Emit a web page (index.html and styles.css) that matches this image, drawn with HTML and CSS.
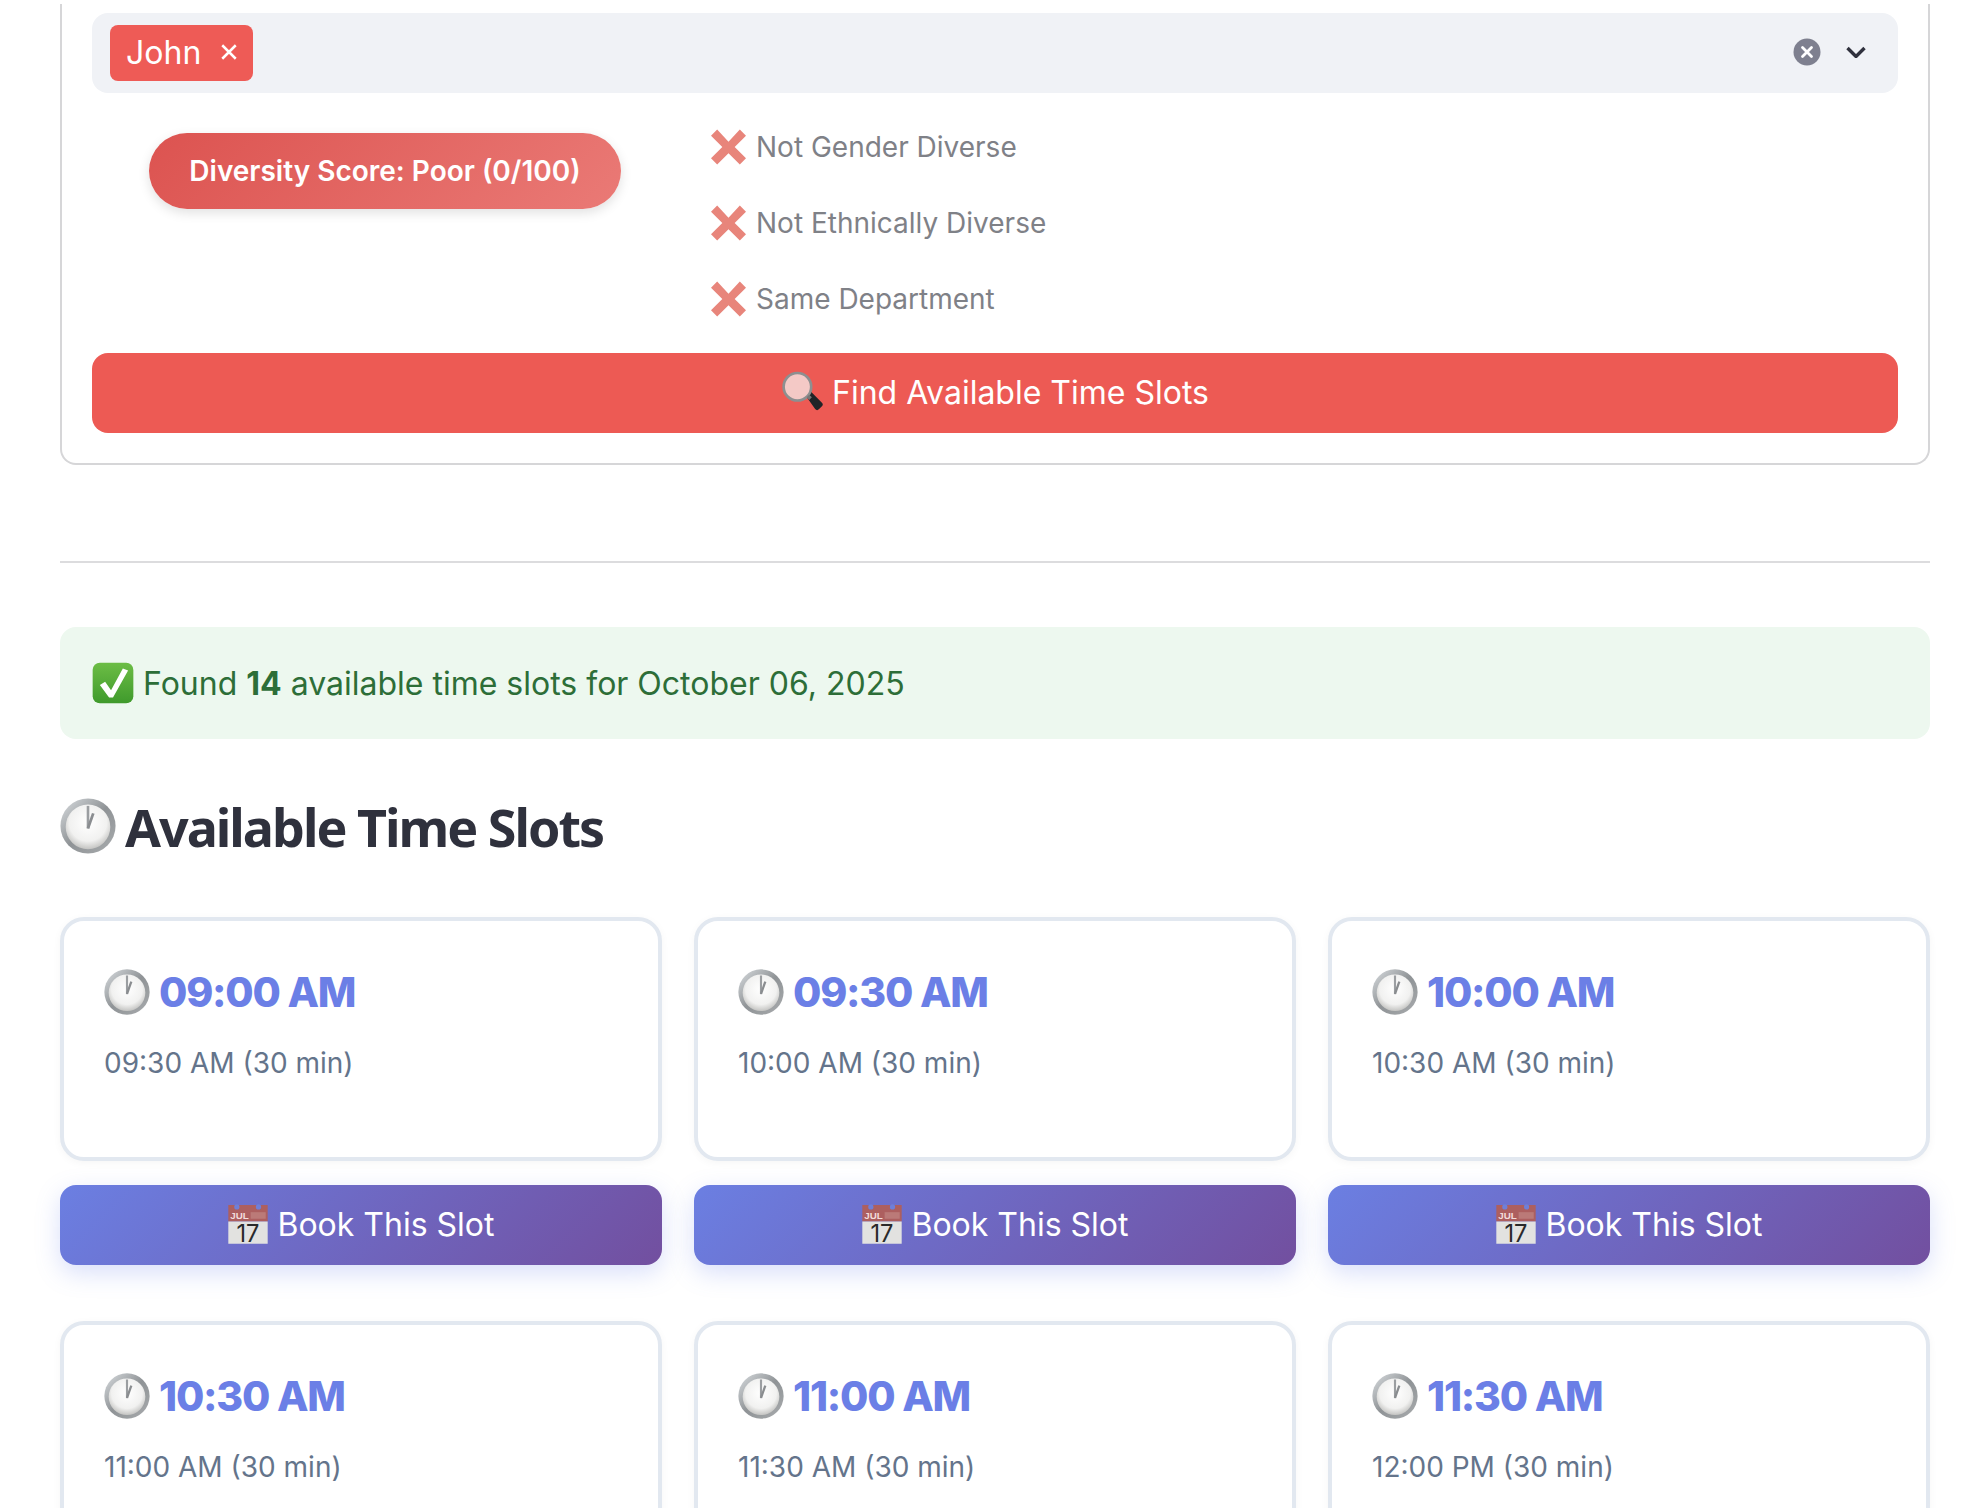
FILE: index.html
```html
<!DOCTYPE html>
<html lang="en">
<head>
    <meta charset="UTF-8">
    <title>Available Time Slots</title>
    <link rel="stylesheet" href="styles.css">
</head>
<body>
    <!-- shared emoji style icons -->
    <svg class="defs" aria-hidden="true">
        <defs>
            <linearGradient id="rim" x1="0" y1="0" x2="1" y2="1">
                <stop offset="0" stop-color="#d9dde0"/>
                <stop offset="0.5" stop-color="#8f9396"/>
                <stop offset="1" stop-color="#a9acae"/>
            </linearGradient>
            <radialGradient id="face" cx="0.5" cy="0.4" r="0.6">
                <stop offset="0" stop-color="#ffffff"/>
                <stop offset="0.7" stop-color="#f1f1f0"/>
                <stop offset="1" stop-color="#c4c4c2"/>
            </radialGradient>
            <linearGradient id="tick" x1="0" y1="0" x2="0" y2="1">
                <stop offset="0" stop-color="#6cbd45"/>
                <stop offset="1" stop-color="#3f9a2c"/>
            </linearGradient>
            <symbol id="clock" viewBox="0 0 64 64">
                <circle cx="32" cy="32" r="31.5" fill="url(#rim)"/>
                <circle cx="32" cy="33" r="25.5" fill="url(#face)"/>
                <path d="M30.5 9h3v26h-3z" fill="#9b9ea1"/>
                <path d="M30.5 34l6-17 3 1-6 17z" fill="#8a8d90"/>
            </symbol>
            <symbol id="calendar" viewBox="0 0 64 64">
                <path d="M2 3h60v25H2z" fill="#ad5f5f"/>
                <path d="M2 28h60v34H2z" fill="#e2e2e0"/>
                <path d="M36 14h23v10H36z" fill="#bb7a78"/>
                <circle cx="15" cy="6" r="4" fill="#6f7fd8"/>
                <circle cx="48" cy="6" r="4" fill="#6f7fd8"/>
                <text x="5" y="25" class="cal-month">JUL</text>
                <text x="32" y="59" class="cal-day">17</text>
            </symbol>
            <symbol id="search" viewBox="0 0 64 64">
                <path d="M38 38l7-7 17 17a4 4 0 0 1 0 6l-4 4a4 4 0 0 1-6 0z" fill="#1f2327"/>
                <circle cx="25" cy="24" r="21" fill="#f4c9c6" stroke="#8d8f90" stroke-width="4"/>
                <path d="M39 40l4-4 4 4-4 4z" fill="#777"/>
            </symbol>
            <symbol id="cross" viewBox="0 0 34 34">
                <path d="M6 0l11 12L28 0l6 6-11 11 11 11-6 6-11-11L6 34l-6-6 11-11L0 6z" fill="currentColor"/>
            </symbol>
        </defs>
    </svg>

    <section class="panel">
        <div class="select">
            <span class="tag"><span>John</span>
                <svg class="tag-x" viewBox="0 0 16 16"><path d="M2 2l12 12M14 2L2 14" stroke="#fff" stroke-width="2.2"/></svg>
            </span>
            <span class="select-icons">
                <svg class="clear" viewBox="0 0 28 28">
                    <circle cx="14" cy="14" r="13.5" fill="#7e808f"/>
                    <path d="M9.500 9.500l9 9m0-9l-9 9" stroke="#fff" stroke-width="2.8" stroke-linecap="round"/>
                </svg>
                <svg class="chevron" viewBox="0 0 20 12">
                    <path d="M1.500 2l8.500 8.500L18.500 2" fill="none" stroke="#2f313d" stroke-width="3.4"/>
                </svg>
            </span>
        </div>

        <div class="diversity">
            <div class="score">Diversity Score: Poor (0/100)</div>
            <ul class="checks">
                <li><svg class="x-icon"><use href="#cross"/></svg>Not Gender Diverse</li>
                <li><svg class="x-icon"><use href="#cross"/></svg>Not Ethnically Diverse</li>
                <li><svg class="x-icon"><use href="#cross"/></svg>Same Department</li>
            </ul>
        </div>

        <button class="find-btn"><svg class="search-icon"><use href="#search"/></svg>Find Available Time Slots</button>
    </section>

    <hr class="divider">

    <div class="found"><svg class="found-icon" viewBox="0 0 64 64">
        <rect x="1" y="1" width="62" height="62" rx="11" fill="url(#tick)"/>
        <path d="M12 35l8-5 9 13L47 10l8 3-23 41h-6z" fill="#fff"/>
    </svg><span>Found <b>14</b> available time slots for October 06, 2025</span></div>

    <h2 class="title"><svg class="title-icon"><use href="#clock"/></svg>Available Time Slots</h2>

    <div class="slots">
        <div class="slot">
            <div class="card">
                <div class="time"><svg class="time-icon"><use href="#clock"/></svg>09:00 AM</div>
                <div class="until">09:30 AM (30 min)</div>
            </div>
            <button class="book-btn"><svg class="btn-icon"><use href="#calendar"/></svg>Book This Slot</button>
        </div>
        <div class="slot">
            <div class="card">
                <div class="time"><svg class="time-icon"><use href="#clock"/></svg>09:30 AM</div>
                <div class="until">10:00 AM (30 min)</div>
            </div>
            <button class="book-btn"><svg class="btn-icon"><use href="#calendar"/></svg>Book This Slot</button>
        </div>
        <div class="slot">
            <div class="card">
                <div class="time"><svg class="time-icon"><use href="#clock"/></svg>10:00 AM</div>
                <div class="until">10:30 AM (30 min)</div>
            </div>
            <button class="book-btn"><svg class="btn-icon"><use href="#calendar"/></svg>Book This Slot</button>
        </div>
        <div class="slot">
            <div class="card">
                <div class="time"><svg class="time-icon"><use href="#clock"/></svg>10:30 AM</div>
                <div class="until">11:00 AM (30 min)</div>
            </div>
        </div>
        <div class="slot">
            <div class="card">
                <div class="time"><svg class="time-icon"><use href="#clock"/></svg>11:00 AM</div>
                <div class="until">11:30 AM (30 min)</div>
            </div>
        </div>
        <div class="slot">
            <div class="card">
                <div class="time"><svg class="time-icon"><use href="#clock"/></svg>11:30 AM</div>
                <div class="until">12:00 PM (30 min)</div>
            </div>
        </div>
    </div>
</body>
</html>
```

FILE: styles.css
```css
html { height: 1508px; overflow: hidden; }
body { margin: 0; height: 1508px; overflow: hidden; padding: 4px 56px 0 60px; background: #fff; font-family: Inter, "Liberation Sans", sans-serif; color: #31333f; }
.defs { width: 0; height: 0; position: absolute; }
.cal-month { font: 700 15px "Liberation Sans", sans-serif; fill: #f3dddb; }
.cal-day { font: 400 36px Inter, sans-serif; fill: #2a2a2a; text-anchor: middle; }

/* top panel */
.panel { border: 2px solid #d6d6d8; border-top: none; border-radius: 0 0 16px 16px; padding: 9px 30px 30px; height: 461px; box-sizing: border-box; }
.select { display: flex; align-items: center; justify-content: space-between; height: 80px; padding: 0 32px 0 18px; background: #f0f2f6; border-radius: 16px; }
.tag { display: flex; align-items: center; gap: 19px; height: 56px; padding: 0 15px 2px 16px; box-sizing: border-box; background: #ee5b56; color: #fff; font-size: 32px; border-radius: 8px; }
.tag-x { width: 18px; height: 18px; }
.select-icons { display: flex; align-items: center; gap: 25px; margin-bottom: 2px; }
.clear { width: 28px; height: 28px; }
.chevron { width: 20px; height: 12px; }

.diversity { display: flex; height: 260px; }
.score { align-self: flex-start; margin: 40px 90px 0 57px; width: 472px; height: 76px; box-sizing: border-box; border-radius: 38px; background: linear-gradient(135deg, #dc5350, #ea7a76); color: #fff; font-size: 28px; font-weight: 600; line-height: 76px; text-align: center; box-shadow: 0 4px 12px rgba(0, 0, 0, 0.12); }
.checks { list-style: none; margin: 16px 0 0; padding: 0; color: #7f8187; font-size: 28px; }
.checks li { display: flex; align-items: center; gap: 10px; height: 76px; }
.x-icon { width: 35px; height: 36px; color: #e8857b; }

.find-btn { display: flex; align-items: center; justify-content: center; gap: 9px; width: 100%; height: 80px; padding: 0 0 2px; border: none; border-radius: 16px; background: #ed5a54; color: #fff; font: 400 32px Inter, sans-serif; }
.search-icon { width: 42px; height: 42px; }
.btn-icon { width: 42px; height: 42px; }

.divider { margin: 96px 0 0; border: none; border-top: 2px solid #dcdcde; }

.found { display: flex; align-items: center; gap: 9px; margin-top: 64px; height: 112px; padding-left: 32px; background: #edf8ef; border-radius: 16px; color: #2d6e38; font-size: 32px; }
.found b { font-weight: 700; }
.found-icon { width: 42px; height: 42px; }

.title { display: flex; align-items: center; gap: 9px; margin: 58px 0 0; height: 58px; font: 700 52px "Noto Sans", sans-serif; letter-spacing: -2px; color: #2f313d; }
.title-icon { width: 56px; height: 56px; }

/* time slots */
.slots { display: grid; grid-template-columns: repeat(3, 1fr); column-gap: 32px; row-gap: 56px; margin-top: 62px; }
.card { height: 244px; box-sizing: border-box; padding: 42px 40px; border: 4px solid #e2e8f0; border-radius: 24px; background: #fff; box-shadow: 0 2px 8px rgba(0, 0, 0, 0.04); }
.time { display: flex; align-items: center; gap: 9px; height: 58px; color: #6b7fe6; font-size: 41px; font-weight: 800; letter-spacing: -1.2px; }
.time-icon { width: 46px; height: 46px; }
.until { margin-top: 25px; color: #64748b; font-size: 28px; }
.book-btn { display: flex; align-items: center; justify-content: center; gap: 8px; width: 100%; height: 80px; margin-top: 24px; padding: 0 0 2px; border: none; border-radius: 16px; background: linear-gradient(135deg, #6b7fe2, #724f9f); color: #fff; font: 400 32px Inter, sans-serif; box-shadow: 0 8px 24px rgba(102, 126, 234, 0.25); }
```
